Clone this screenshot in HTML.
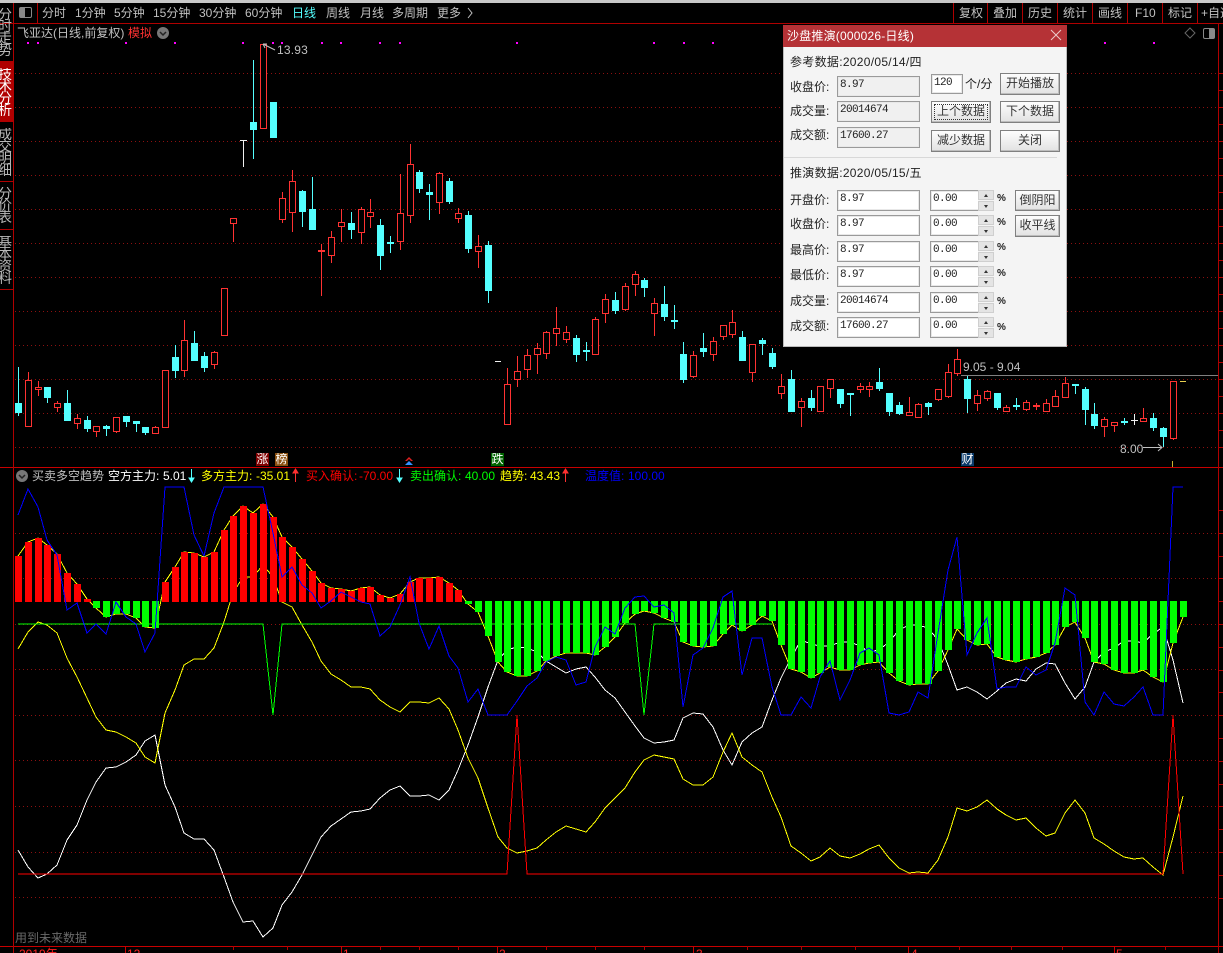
<!DOCTYPE html>
<html lang="zh"><head><meta charset="utf-8"><title>沙盘推演</title>
<style>
html,body{margin:0;padding:0;background:#000;width:1223px;height:953px;overflow:hidden;}
#root{position:relative;width:1223px;height:953px;overflow:hidden;background:#000;font:12px/14px "Liberation Sans","WenQuanYi Zen Hei","Noto Sans CJK SC",sans-serif;color:#c0c0c0;}
.t{position:absolute;white-space:nowrap;line-height:14px;}
svg{position:absolute;left:0;top:0;}
.side{position:absolute;left:0;width:13px;overflow:hidden;color:#b8b8b8;}
.side span{display:block;height:12px;line-height:12px;margin-left:-2px;width:15px;font-size:14px;}
.badge{position:absolute;width:13px;height:13px;line-height:13px;color:#fff;text-align:center;font-size:12px;overflow:hidden;}
#dlg{position:absolute;left:783px;top:25px;width:284px;height:322px;background:#f4f4f4;color:#222;box-shadow:inset 0 0 0 1px #bbb;}
#dlg .t{color:#222;}
#ttl{position:absolute;left:0;top:0;width:284px;height:22px;background:#b53236;}
.i{position:absolute;box-sizing:border-box;background:#fff;border:1px solid #9a9a9a;box-shadow:inset 0 0 0 1px #e8e8e8;color:#222;font:11px/15px "Liberation Mono",monospace;letter-spacing:-.6px;padding:1px 0 0 2px;white-space:pre;}
.ro{background:#f0f0f0;}
.b{position:absolute;box-sizing:border-box;width:60px;height:22px;border:1px solid #808080;background:linear-gradient(#fdfdfd,#e2e2e2);text-align:center;line-height:19px;color:#333;box-shadow:inset -1px -1px 0 #bdbdbd;}
.sp{position:absolute;left:195px;width:16px;height:22px;background:#f4f4f4;}
.sp i{position:absolute;left:0;width:16px;height:10px;box-sizing:border-box;background:#e4e4e4;border:1px solid #cfcfcf;}
.sp i:first-child{top:0}.sp i:last-child{top:11px}
.sp b{position:absolute;left:5px;width:0;height:0;border-left:2.5px solid transparent;border-right:2.5px solid transparent;}
.sp i:first-child b{top:3px;border-bottom:3px solid #333}
.sp i:last-child b{top:3px;border-top:3px solid #333}
.pc{position:absolute;left:214px;font-size:10px;color:#222;font-weight:bold;}
</style></head><body>
<div id="root">

<svg id="c" width="1223" height="953" xmlns="http://www.w3.org/2000/svg"></svg>

<div style="position:absolute;left:0;top:0;width:1223px;height:3px;background:#c8c8c8"></div>

<div class="t" style="left:42px;top:6px">分时</div>
<div class="t" style="left:75px;top:6px">1分钟</div>
<div class="t" style="left:114px;top:6px">5分钟</div>
<div class="t" style="left:153px;top:6px">15分钟</div>
<div class="t" style="left:199px;top:6px">30分钟</div>
<div class="t" style="left:245px;top:6px">60分钟</div>
<div class="t" style="left:292px;top:6px;color:#54ffff">日线</div>
<div class="t" style="left:326px;top:6px">周线</div>
<div class="t" style="left:360px;top:6px">月线</div>
<div class="t" style="left:392px;top:6px">多周期</div>
<div class="t" style="left:437px;top:6px">更多</div>

<div class="t" style="left:959px;top:6px">复权</div>
<div class="t" style="left:993px;top:6px">叠加</div>
<div class="t" style="left:1028px;top:6px">历史</div>
<div class="t" style="left:1063px;top:6px">统计</div>
<div class="t" style="left:1098px;top:6px">画线</div>
<div class="t" style="left:1135px;top:6px">F10</div>
<div class="t" style="left:1168px;top:6px">标记</div>
<div class="t" style="left:1201px;top:6px">+自选</div>

<div class="side" style="top:8px"><span>分</span><span>时</span><span>走</span><span>势</span></div>
<div style="position:absolute;left:0;top:61px;width:13px;height:60px;background:#b00000"></div>
<div class="side" style="top:68px;color:#fff"><span>技</span><span>术</span><span>分</span><span>析</span></div>
<div class="side" style="top:128px"><span>成</span><span>交</span><span>明</span><span>细</span></div>
<div class="side" style="top:187px"><span>分</span><span>价</span><span>表</span></div>
<div class="side" style="top:236px"><span>基</span><span>本</span><span>资</span><span>料</span></div>

<div class="t" style="left:17px;top:26px">飞亚达(日线,前复权)</div>
<div class="t" style="left:128px;top:26px;color:#ff3232">模拟</div>
<div class="t" style="left:277px;top:43px;letter-spacing:.2px">13.93</div>
<div class="t" style="left:963px;top:360px">9.05 - 9.04</div>
<div class="t" style="left:1120px;top:442px">8.00</div>

<div class="badge" style="left:256px;top:453px;background:#800000">涨</div>
<div class="badge" style="left:275px;top:453px;background:#8a5010">榜</div>
<div class="badge" style="left:491px;top:453px;background:#006400">跌</div>
<div class="badge" style="left:961px;top:453px;background:#0a3a6a">财</div>

<div class="t" style="left:32px;top:469px">买卖多空趋势</div>
<div class="t" style="left:108px;top:469px;color:#fff">空方主力:</div>
<div class="t" style="left:163px;top:469px;color:#fff">5.01</div>
<div class="t" style="left:201px;top:469px;color:#ffff00">多方主力:</div>
<div class="t" style="left:256px;top:469px;color:#ffff00">-35.01</div>
<div class="t" style="left:306px;top:469px;color:#ff0000">买入确认:</div>
<div class="t" style="left:359px;top:469px;color:#ff0000">-70.00</div>
<div class="t" style="left:410px;top:469px;color:#00ff00">卖出确认:</div>
<div class="t" style="left:465px;top:469px;color:#00ff00">40.00</div>
<div class="t" style="left:500px;top:469px;color:#ffff00">趋势:</div>
<div class="t" style="left:530px;top:469px;color:#ffff00">43.43</div>
<div class="t" style="left:585px;top:469px;color:#0000ff">温度值:</div>
<div class="t" style="left:628px;top:469px;color:#0000ff">100.00</div>

<div class="t" style="left:15px;top:931px;color:#6a6a6a">用到未来数据</div>

<div class="t" style="left:19px;top:947px;color:#ff2020">2019年</div>
<div class="t" style="left:127px;top:947px;color:#ff2020">12</div>
<div class="t" style="left:343px;top:947px;color:#ff2020">1</div>
<div class="t" style="left:499px;top:947px;color:#ff2020">2</div>
<div class="t" style="left:696px;top:947px;color:#ff2020">3</div>
<div class="t" style="left:911px;top:947px;color:#ff2020">4</div>
<div class="t" style="left:1116px;top:947px;color:#ff2020">5</div>

<div id="dlg">
  <div id="ttl"></div>
  <div class="t" style="left:4px;top:4px;color:#fff;font-size:12px;letter-spacing:.2px">沙盘推演(000026-日线)</div>
  <svg width="284" height="22" style="left:0;top:0"><path d="M268 5 L278 15 M278 5 L268 15" stroke="#eccaca" stroke-width="1" fill="none"/></svg>

  <div class="t" style="left:7px;top:30px;letter-spacing:.3px">参考数据:2020/05/14/四</div>
  <div class="t" style="left:7px;top:55px">收盘价:</div>
  <div class="t" style="left:7px;top:79px">成交量:</div>
  <div class="t" style="left:7px;top:103px">成交额:</div>
  <div class="i ro" style="left:54px;top:51px;width:83px;height:21px">8.97</div>
  <div class="i ro" style="left:54px;top:76px;width:83px;height:21px">20014674</div>
  <div class="i ro" style="left:54px;top:102px;width:83px;height:21px">17600.27</div>
  <div class="i" style="left:148px;top:49px;width:32px;height:20px;">120</div>
  <div class="t" style="left:182px;top:52px">个/分</div>
  <div class="b" style="left:217px;top:48px">开始播放</div>
  <div class="b" style="left:148px;top:76px;outline:1px dotted #333;outline-offset:-4px">上个数据</div>
  <div class="b" style="left:217px;top:76px">下个数据</div>
  <div class="b" style="left:148px;top:105px">减少数据</div>
  <div class="b" style="left:217px;top:105px">关闭</div>
  <div style="position:absolute;left:1px;top:132px;width:273px;height:1px;background:#d8d8d8"></div>

  <div class="t" style="left:7px;top:141px;letter-spacing:.3px">推演数据:2020/05/15/五</div>

  <div class="t" style="left:7px;top:168px">开盘价:</div>
  <div class="t" style="left:7px;top:192px">收盘价:</div>
  <div class="t" style="left:7px;top:218px">最高价:</div>
  <div class="t" style="left:7px;top:243px">最低价:</div>
  <div class="t" style="left:7px;top:269px">成交量:</div>
  <div class="t" style="left:7px;top:294px">成交额:</div>

  <div class="i" style="left:54px;top:165px;width:83px;height:21px">8.97</div>
  <div class="i" style="left:54px;top:190px;width:83px;height:21px">8.97</div>
  <div class="i" style="left:54px;top:216px;width:83px;height:21px">8.97</div>
  <div class="i" style="left:54px;top:241px;width:83px;height:21px">8.97</div>
  <div class="i" style="left:54px;top:267px;width:83px;height:21px">20014674</div>
  <div class="i" style="left:54px;top:292px;width:83px;height:21px">17600.27</div>

  <div class="i" style="left:147px;top:165px;width:49px;height:21px;border-right:0">0.00</div>
  <div class="i" style="left:147px;top:190px;width:49px;height:21px;border-right:0">0.00</div>
  <div class="i" style="left:147px;top:216px;width:49px;height:21px;border-right:0">0.00</div>
  <div class="i" style="left:147px;top:241px;width:49px;height:21px;border-right:0">0.00</div>
  <div class="i" style="left:147px;top:267px;width:49px;height:21px;border-right:0">0.00</div>
  <div class="i" style="left:147px;top:292px;width:49px;height:21px;border-right:0">0.00</div>

  <div class="sp" style="top:165px"><i><b></b></i><i><b></b></i></div>
  <div class="sp" style="top:190px"><i><b></b></i><i><b></b></i></div>
  <div class="sp" style="top:216px"><i><b></b></i><i><b></b></i></div>
  <div class="sp" style="top:241px"><i><b></b></i><i><b></b></i></div>
  <div class="sp" style="top:267px"><i><b></b></i><i><b></b></i></div>
  <div class="sp" style="top:292px"><i><b></b></i><i><b></b></i></div>

  <div class="pc" style="top:167px">%</div>
  <div class="pc" style="top:191px">%</div>
  <div class="pc" style="top:216px">%</div>
  <div class="pc" style="top:242px">%</div>
  <div class="pc" style="top:270px">%</div>
  <div class="pc" style="top:296px">%</div>

  <div class="b" style="left:232px;top:165px;width:45px;height:21px">倒阴阳</div>
  <div class="b" style="left:232px;top:190px;width:45px;height:22px">收平线</div>
</div>
</div>

<script>
(function(){
var R='#ff3232',C='#54ffff',W='#f0f0f0',s='';
function X(i){return Math.floor(18.6+9.785*i);}
function line(a,b,c,d,col,extra){return '<line x1="'+a+'" y1="'+b+'" x2="'+c+'" y2="'+d+'" stroke="'+col+'" '+(extra||'')+'/>';}
function rect(x,y,w,h,f){return '<rect x="'+x+'" y="'+y+'" width="'+w+'" height="'+h+'" fill="'+f+'"/>';}

/* grids */
var g='stroke-dasharray="1 3"';
for(var y=73;y<=447;y+=34) s+=line(15,y+.5,1218,y+.5,'#8c1010',g);
[533,578,624,669,715,760,806,852,897].forEach(function(y){s+=line(15,y+.5,1218,y+.5,'#8c1010',g);});

/* frame */
var F='#b00000';
s+=line(0,23.5,1223,23.5,F)+line(0,467.5,1223,467.5,'#c80000')+line(0,946.5,1223,946.5,'#c80000');
s+=line(13.5,3,13.5,953,F)+line(1218.5,23,1218.5,953,F);
s+=line(37.5,3,37.5,23,F);
[953,987,1022,1057,1092,1127,1162,1197].forEach(function(x){s+=line(x+.5,3,x+.5,23,F);});
[61,121,181,229,289].forEach(function(y){s+=line(0,y+.5,13,y+.5,F);});
for(y=73;y<=447;y+=17) s+=line(1218,y+.5,1223,y+.5,F);
for(y=510;y<=920;y+=22.8) s+=line(1218,Math.round(y)+.5,1223,Math.round(y)+.5,F);
[233,287,380,419,458,546,595,644,747,801,855,959,1011,1062,1165].forEach(function(x){s+=line(x+.5,946,x+.5,950,F);});
[125,341,497,693,908,1114].forEach(function(x){s+=line(x+.5,946,x+.5,953,'#c80000');});

/* toolbar icons */
s+='<rect x="19.5" y="7.5" width="12" height="10" rx="1.5" fill="#000" stroke="#888"/><rect x="20" y="8" width="5" height="9" fill="#888"/>';
s+='<path d="M468 8 L472 13 L468 18" fill="none" stroke="#c0c0c0"/>';
s+='<circle cx="163" cy="33" r="6" fill="#777"/><path d="M160 32 L163 35 L166 32" fill="none" stroke="#222" stroke-width="1.5"/>';
s+='<circle cx="22" cy="476" r="6" fill="#777"/><path d="M19 475 L22 478 L25 475" fill="none" stroke="#222" stroke-width="1.5"/>';
s+='<path d="M1190 28 L1195 33 L1190 38 L1185 33 Z" fill="none" stroke="#666"/>';
s+='<rect x="1203.5" y="28.5" width="11" height="10" rx="1.5" fill="#000" stroke="#888"/><rect x="1209" y="29" width="5" height="9" fill="#888"/>';

/* magenta dots */
[28,38,126,175,243,273,282,322,341,380,400,517,654,684,713,1105,1154].forEach(function(x){s+=rect(x-1,42,2,2,'#ff00ff');});

/* candles: type, high, top, bottom, low */
var K=[['c',367,403,413,416],['r',372,380,426,426],['r',381,387,389,396],['c',387,387,398,403],['r',401,403,407,412],['c',390,403,421,421],['r',414,418,423,429],['c',416,420,429,432],['r',426,426,431,437],['c',425,426,429,436],
['r',417,417,431,433],['c',416,416,422,427],['c',421,421,424,432],['c',427,427,433,435],['r',426,427,433,433],['r',370,370,427,427],['c',345,357,371,378],['r',320,340,370,377],['c',331,343,361,361],['c',352,356,368,372],
['r',351,352,364,369],['r',288,288,335,335],['r',218,218,223,242],['w',140,140,141,167],['c',60,122,130,159],['r',44,44,128,128],['c',102,102,138,138],['r',192,198,219,223],['r',170,181,212,232],['c',190,191,212,227],
['c',177,209,230,230],['r',244,250,251,296],['r',231,237,255,263],['r',209,222,226,242],['c',212,223,230,239],['r',207,209,232,244],['r',199,212,216,228],['c',219,225,256,270],['c',236,242,244,253],['r',174,213,241,250],
['r',144,164,215,223],['c',170,172,189,193],['c',184,192,195,220],['r',172,173,202,214],['c',178,181,202,204],['r',208,213,218,223],['c',211,215,249,253],['r',235,246,251,268],['c',241,245,291,303],['w',361,361,362,362],
['r',368,384,424,424],['r',356,371,379,387],['r',349,355,369,378],['r',343,348,354,374],['r',331,332,353,359],['r',307,328,333,346],['r',326,332,339,343],['c',335,338,355,362],['c',342,350,352,361],['r',317,319,354,354],
['r',294,299,313,323],['c',292,300,311,314],['r',283,286,309,311],['r',271,274,284,296],['c',278,280,288,297],['r',298,303,313,336],['c',286,304,317,321],['c',305,320,322,329],['c',342,354,380,383],['r',351,355,376,378],
['c',333,348,352,357],['r',337,341,354,361],['r',325,325,336,340],['r',310,322,334,338],['c',331,337,361,361],['r',344,344,372,382],['c',338,340,344,355],['c',348,353,367,369],['r',374,386,393,399],['c',370,379,412,412],
['r',398,401,407,427],['c',390,398,408,411],['r',386,386,411,411],['r',379,379,388,398],['c',389,389,404,408],['c',393,393,395,416],['r',383,386,389,393],['r',382,386,389,397],['c',368,382,389,391],['c',393,393,412,416],
['c',402,405,414,415],['r',397,412,415,416],['r',403,404,417,417],['c',402,403,407,415],['r',389,389,399,401],['r',364,372,396,398],['r',349,359,373,376],['c',376,379,399,413],['r',390,395,403,411],['r',390,391,398,401],
['c',393,393,408,410],['r',405,407,411,411],['c',398,405,407,410],['r',400,402,409,411],['r',403,405,406,410],['r',399,403,411,411],['r',390,396,406,406],['r',377,383,397,397],['c',384,384,386,394],['c',387,389,410,425],
['c',403,414,426,429],['r',417,419,426,437],['r',422,422,425,432],['c',418,421,423,425],['w',414,420,421,425],['r',408,418,421,421],['c',413,418,428,431],['c',427,428,437,447],['r',381,381,438,440]];
K.forEach(function(k,i){
 var x=X(i),t=k[0],col=t=='r'?R:t=='c'?C:W;
 if(t=='w'&&i==23){s+=line(x+.5,k[1],x+.5,k[4],W)+line(x-3,k[1]+.5,x+4,k[1]+.5,W);return;}
 if(t=='w'&&i==49){s+=line(x-3,361.5,x+3,361.5,W);return;}
 s+=line(x+.5,k[1],x+.5,k[2],col)+line(x+.5,k[3],x+.5,k[4],col);
 if(t=='r'){ s+='<rect x="'+(x-2.5)+'" y="'+(k[2]+.5)+'" width="6" height="'+Math.max(1,k[3]-k[2])+'" fill="#000" stroke="'+R+'"/>'; }
 else if(t=='c') s+=rect(x-3,k[2],7,Math.max(2,k[3]-k[2]),C);
 else s+=rect(x-3,k[2],7,1,W)+line(x+.5,k[1],x+.5,k[4],W);
});
s+=line(1180,381.5,1186,381.5,'#e8d050');
s+=line(1172.5,461,1172.5,467,'#c8b030');
s+=line(961,375.5,1218,375.5,'#808080');
s+='<path d="M263 44 L275 50 M263 44 L267 44 M263 44 L265 48" fill="none" stroke="#c0c0c0"/>';
s+='<path d="M1143 447.5 H1162 M1158 444 L1162 447.5 L1158 451" fill="none" stroke="#c0c0c0"/>';
s+='<path d="M405 461 L409 457 L413 461 L411 461 L409 459 L407 461 Z" fill="#e02020"/><path d="M405 465 L409 461 L413 465 Z" fill="#3090ff"/>';

/* header arrows */
function arrow(x,col,down){
 var a=down?'M'+x+'.5 469 V478 M'+(x-2)+' 478 H'+(x+3)+' L'+x+'.5 482 Z':'M'+x+'.5 482 V473 M'+(x-2)+' 473 H'+(x+3)+' L'+x+'.5 469 Z';
 return '<path d="'+a+'" fill="'+col+'" stroke="'+col+'" stroke-width="1"/>';
}
s+=arrow(191,C,true)+arrow(295,'#ff3030',false)+arrow(399,C,true)+arrow(565,'#ff3030',false);

/* indicator series */
var H=[556,542,538,545,554,573,584,599,608,617,614,614,618,627,628,582,567,552,553,557,552,530,516,506,513,504,517,537,547,559,571,583,588,589,591,588,587,595,598,594,582,578,578,577,583,590,604,612,636,662,672,676,676,671,661,656,653,653,653,655,647,637,623,614,611,613,618,622,642,646,647,646,634,625,631,625,616,621,645,669,672,678,673,667,670,670,665,663,662,673,681,685,684,684,671,650,629,640,645,644,657,660,662,659,657,653,645,627,622,638,662,664,670,673,673,670,677,682,643,617];
var WH=[850,867,878,874,865,840,825,800,782,768,767,762,755,741,735,785,807,833,839,839,850,877,902,922,921,937,928,905,892,875,855,837,826,819,812,811,809,798,790,786,796,796,795,800,790,770,745,717,687,660,650,647,648,652,661,667,673,669,667,677,690,698,712,726,738,743,742,740,718,713,714,727,750,765,742,733,727,700,678,658,640,644,646,646,642,642,646,652,650,642,630,625,625,628,640,665,690,687,692,699,691,683,679,681,669,663,664,683,699,687,662,652,648,641,641,643,634,627,660,703];
var Y2=[649,632,622,625,633,658,677,698,717,730,732,737,743,757,763,713,690,665,659,659,648,622,593,577,577,565,577,602,607,625,642,661,674,680,687,687,689,700,707,712,702,702,703,698,709,730,758,778,808,837,848,853,851,848,840,832,826,829,832,822,808,798,788,772,760,755,757,759,779,785,785,777,752,733,757,765,772,797,817,846,853,861,857,848,856,858,854,849,845,858,868,873,872,873,860,837,808,811,807,800,809,815,820,818,828,836,833,813,800,813,838,844,851,857,859,858,867,875,837,796];
var BL=[515,489,507,540,555,610,603,633,624,634,602,617,624,652,633,487,487,487,535,556,513,487,487,487,487,487,533,577,567,585,593,608,601,592,597,602,604,636,627,605,577,623,649,626,656,668,702,689,715,715,715,701,686,678,662,657,660,685,682,647,627,634,608,597,596,607,605,613,707,655,648,628,597,591,675,638,638,687,715,715,697,708,677,661,700,680,653,648,655,713,715,712,692,698,633,570,537,655,633,618,689,687,687,667,675,670,643,588,595,702,715,692,704,706,697,687,715,715,487,487];
function poly(a,col){return '<polyline fill="none" stroke="'+col+'" shape-rendering="crispEdges" points="'+a.map(function(v,i){return X(i)+','+v;}).join(' ')+'"/>';}
s+=poly(WH,'#ffffff')+poly(Y2,'#ffff00')+poly(H,'#ffff00');
H.forEach(function(v,i){
 var x=X(i)-3;
 if(v<601) s+=rect(x,v,7,602-v,'#ff0000'); else s+=rect(x,601,7,v-601,'#00ff00');
});
/* green line */
var gp=[];for(var i=0;i<=77;i++){var v=624;if(i==26||i==64)v=715;gp.push(X(i)+','+v);}
s+='<polyline fill="none" stroke="#00ff00" shape-rendering="crispEdges" points="'+gp.join(' ')+'"/>';
s+=poly(BL,'#0000ff');
/* red line */
var rp=[];for(i=0;i<120;i++){rp.push(X(i)+','+((i==51||i==118)?715:874));}
s+='<polyline fill="none" stroke="#ff0000" stroke-width="1" shape-rendering="crispEdges" points="'+rp.join(' ')+'"/>';
document.getElementById('c').innerHTML=s;
})();
</script>
</body></html>
